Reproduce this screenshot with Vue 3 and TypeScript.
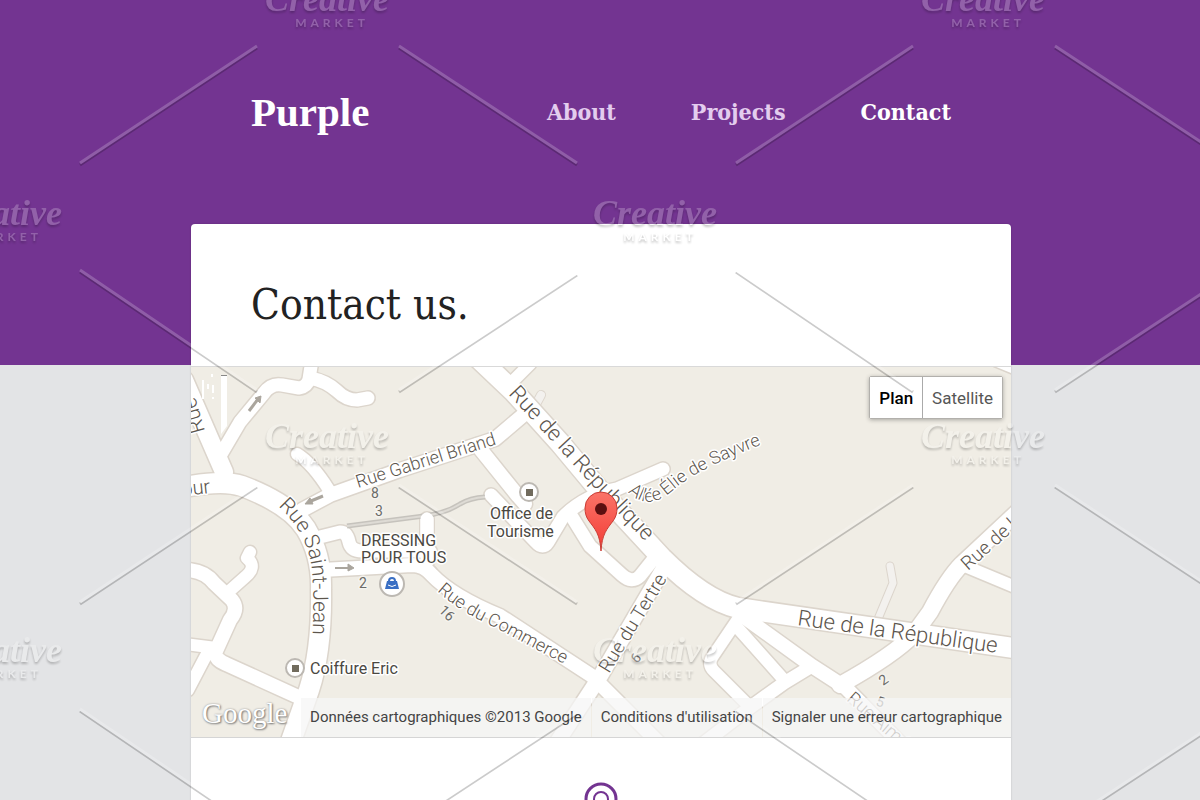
<script setup lang="ts">
interface Road {
  d: string
  w: number
}

interface StreetLabel {
  id: string
  d: string
  text: string
  size: number
}

interface Tile {
  x: number
  y: number
}

const navLinks = [
  { label: 'About', active: false },
  { label: 'Projects', active: false },
  { label: 'Contact', active: true },
]

const roads: Road[] = [
  { d: 'M184 380L224 472', w: 18 },
  { d: 'M220 456L240 422L264 393Q271 383 282 385L299 388Q307 387 309 379L312 360', w: 13 },
  { d: 'M310 378Q326 381 337 391Q346 400 357 400L368 398', w: 13 },
  { d: 'M180 488Q222 479 242 486Q290 504 306 529Q322 556 321 590Q322 650 309 690L290 744', w: 20 },
  { d: 'M297 454Q312 463 329 490', w: 12 },
  { d: 'M302 510L330 495L400 470L495 439L528 411', w: 14 },
  { d: 'M474 354L514 392L560 443L600 491L662 558Q704 600 738 608L1020 649', w: 20 },
  { d: 'M512 382L530 364', w: 12 },
  { d: 'M477 445L518 496L525 504', w: 14 },
  { d: 'M491 495L536 542Q543 550 548 542L563 517Q585 495 617 489L663 469', w: 13 },
  { d: 'M572 517L590 546L622 575Q632 584 640 576L656 556', w: 13 },
  { d: 'M666 564L601 675L556 744', w: 15 },
  { d: 'M322 570L412 565Q424 565 432 575Q452 596 500 616L592 676L662 746', w: 14 },
  { d: 'M320 537L340 532Q347 532 349 542Q351 551 362 551L430 551', w: 13 },
  { d: 'M427 519L427 562', w: 13 },
  { d: 'M250 552L247 558Q258 567 244 578L226 594', w: 12 },
  { d: 'M185 570Q204 570 214 583L232 600Q239 609 230 620L215 653Q216 660 226 664L305 700', w: 14 },
  { d: 'M185 644L216 648', w: 12 },
  { d: 'M210 648L188 690', w: 12 },
  { d: 'M1022 508L962 564Q948 578 930 612L914 634Q894 655 840 685', w: 16 },
  { d: 'M960 564L1020 589', w: 12 },
  { d: 'M740 616L713 656Q707 664 714 671L750 707', w: 12 },
  { d: 'M736 626L784 680', w: 12 },
  { d: 'M740 614L812 666L846 688L905 748', w: 14 },
  { d: 'M700 746L752 706L784 683L812 666', w: 13 },
  { d: 'M996 362L1020 372', w: 9 },
]

const lanes: Road[] = [
  { d: 'M534 408L541 395', w: 8 },
  { d: 'M890 566L893 583L878 619', w: 7 },
]

const streets: StreetLabel[] = [
  { id: 'rep-west', d: 'M508 394L560 450L600 494L680 578', text: 'Rue de la République', size: 22 },
  { id: 'rep-east', d: 'M797 625L1040 659', text: 'Rue de la République', size: 22 },
  { id: 'briand', d: 'M358 488L510 440', text: 'Rue Gabriel Briand', size: 18 },
  { id: 'saint-jean', d: 'M278 506Q308 533 312 570Q315 600 311 670', text: 'Rue Saint-Jean', size: 21 },
  { id: 'commerce', d: 'M437 591Q460 612 494 627L585 675', text: 'Rue du Commerce', size: 18 },
  { id: 'tertre', d: 'M609 674L680 558', text: 'Rue du Tertre', size: 19 },
  { id: 'sayvre', d: 'M628 492Q648 512 672 491Q700 466 780 438', text: 'Allée Élie de Sayvre', size: 18 },
  { id: 'north', d: 'M205 431L188 372', text: 'Rue', size: 21 },
  { id: 'four', d: 'M182 496L240 490', text: 'our', size: 20 },
  { id: 'east', d: 'M968 571L1040 507', text: 'Rue de l', size: 19 },
  { id: 'aime', d: 'M846 700L915 760', text: 'Rue Aimé', size: 18 },
]

const houseNumbers = [
  { text: '8', x: 371, y: 498, r: 0 },
  { text: '3', x: 375, y: 516, r: 0 },
  { text: '2', x: 359, y: 588, r: 0 },
  { text: '16', x: 438, y: 611, r: 45 },
  { text: '6', x: 637, y: 664, r: -50 },
  { text: '2', x: 883, y: 686, r: -35 },
  { text: '5', x: 875, y: 705, r: 20 },
]

const marks: Tile[] = [
  { x: 327, y: 0 },
  { x: 983, y: 0 },
  { x: 0, y: 214 },
  { x: 655, y: 214 },
  { x: 327, y: 437 },
  { x: 983, y: 437 },
  { x: 0, y: 651 },
  { x: 655, y: 651 },
]

const strokes: string[] = [0, 439].flatMap((y) =>
  [0, 656].map(
    (x) =>
      `M${80 + x} ${163 + y}l177-117M${399 + x} ${46 + y}l178 117` +
      `M${80 + x} ${270 + y}l177 120M${577 + x} ${273 + y}l-178 117`,
  ),
)
</script>

<template>
  <div class="page">
    <header class="header">
      <a class="logo" href="#">Purple</a>
      <nav class="nav">
        <a v-for="n in navLinks" :key="n.label" href="#" :class="{ active: n.active }">{{ n.label }}</a>
      </nav>
    </header>

    <main class="card">
      <h1>Contact us.</h1>

      <section class="map">
        <svg class="tiles" viewBox="191 367 820 370" preserveAspectRatio="xMidYMid slice">
          <g class="casing light">
            <path v-for="l in lanes" :key="l.d" :d="l.d" :stroke-width="l.w + 2" />
          </g>
          <g class="lane">
            <path v-for="l in lanes" :key="l.d" :d="l.d" :stroke-width="l.w" />
          </g>
          <g class="casing">
            <path v-for="r in roads" :key="r.d" :d="r.d" :stroke-width="r.w + 3" />
          </g>
          <g class="fill">
            <path v-for="r in roads" :key="r.d" :d="r.d" :stroke-width="r.w" />
          </g>
          <path class="rail" d="M347 526L424 516Q446 513 460 504Q470 498 485 497" />
          <path class="rail-core" d="M347 526L424 516Q446 513 460 504Q470 498 485 497" />
          <path d="M427 519v14" stroke="#fff" stroke-width="13" stroke-linecap="round" />

          <path d="M221 376h6v50l-6 8z" fill="#fff" />
          <path d="M221 375h6v1h-6z" fill="#888" />
          <path d="M203 380v19M208 384v5M212 374v3M213 385v8M213 397v2" stroke="#fff" stroke-width="2" />

          <g fill="#aaa59d" stroke="#aaa59d" stroke-width="3">
            <path d="M249 411l9-12" /><path d="M255 398l6-2-1 7z" stroke-width="1" />
            <path d="M323 496l-12 5" /><path d="M305 504l5-6 3 6z" stroke-width="1" />
            <path d="M335 568h14" stroke-width="2" /><path d="M348 564l6 4-6 3z" stroke-width="1" />
          </g>

          <defs>
            <path v-for="s in streets" :id="s.id" :key="s.id" :d="s.d" />
            <linearGradient id="pin-red" x1="0" y1="0" x2="0" y2="1">
              <stop offset="0" stop-color="#fb7468" />
              <stop offset="1" stop-color="#f23b35" />
            </linearGradient>
          </defs>
          <text v-for="s in streets" :key="s.id" class="street" :font-size="s.size">
            <textPath :href="'#' + s.id">{{ s.text }}</textPath>
          </text>
          <text
            v-for="(n, i) in houseNumbers"
            :key="i"
            class="number"
            :x="n.x"
            :y="n.y"
            :transform="`rotate(${n.r} ${n.x} ${n.y})`"
          >{{ n.text }}</text>

          <g class="poi">
            <circle cx="529" cy="492" r="9" />
            <path d="M526 489h7v7h-7z" />
            <circle cx="295" cy="668" r="9" />
            <path d="M292 665h7v7h-7z" />
            <circle cx="392" cy="584" r="12" />
          </g>
          <path d="M387 581h10l2 8h-14z" fill="#3a6fc4" />
          <path d="M389 583v-2a3 3 0 0 1 6 0v2" fill="none" stroke="#3a6fc4" stroke-width="2" />
          <path d="M388 585q4 3 8 0" fill="none" stroke="#fff" />
          <g class="place">
            <text x="490" y="519">Office de</text>
            <text x="487" y="537">Tourisme</text>
            <text x="361" y="546">DRESSING</text>
            <text x="361" y="563">POUR TOUS</text>
            <text x="310" y="674">Coiffure Eric</text>
          </g>

          <path
            d="M601 551C600 534 595 529 589 521C586 517 585 513 585 508A16 16 0 0 1 617 508C617 513 616 517 613 521C607 529 602 534 601 551Z"
            fill="url(#pin-red)"
            stroke="#ca3b33"
          />
          <circle cx="601" cy="509" r="6" fill="#5c0f10" />
        </svg>

        <div class="switch">
          <button type="button" class="on">Plan</button>
          <button type="button">Satellite</button>
        </div>
        <span class="google">Google</span>
        <div class="credits">
          <span>Données cartographiques ©2013 Google</span>
          <a href="#">Conditions d'utilisation</a>
          <a href="#">Signaler une erreur cartographique</a>
        </div>
      </section>

      <div class="address">
        <svg width="34" height="44" viewBox="0 0 34 44" fill="none" stroke="#733491">
          <path d="M17 42C15 32 2 26 2 17A15 15 0 0 1 32 17C32 26 19 32 17 42Z" stroke-width="3" />
          <circle cx="17" cy="17" r="7" stroke-width="2" />
        </svg>
      </div>
    </main>

    <svg class="watermark" aria-hidden="true">
      <g class="lines">
        <path v-for="s in strokes" :key="s" :d="s" />
      </g>
      <g v-for="m in marks" :key="m.x + '-' + m.y" class="mark">
        <text class="script" :x="m.x" :y="m.y + 11">Creative</text>
        <text class="caps" :x="m.x + 5" :y="m.y + 27">MARKET</text>
      </g>
    </svg>
  </div>
</template>

<style>
html,
body {
  margin: 0;
  background: #e3e4e6;
}
</style>

<style scoped>
.page {
  position: relative;
  box-sizing: border-box;
  height: 100vh;
  min-height: 600px;
  padding-left: 2px;
  overflow: hidden;
  background: linear-gradient(#733491 0 365px, #e3e4e6 365px);
  font-family: Roboto, 'Liberation Sans', sans-serif;
}

.header {
  display: flex;
  align-items: center;
  justify-content: space-between;
  box-sizing: border-box;
  width: min(820px, 100%);
  height: 224px;
  margin: 0 auto;
  padding: 0 60px;
}

.logo {
  color: #fff;
  font: bold 41px/48px 'Liberation Serif', serif;
  text-decoration: none;
}

.nav {
  display: flex;
  gap: 75px;
}

.nav a {
  color: #e3cdee;
  font: bold 23px/32px 'DejaVu Serif Condensed', 'DejaVu Serif', serif;
  text-decoration: none;
}

.nav a.active {
  color: #fff;
}

.card {
  width: min(820px, 100%);
  margin: 0 auto;
  border-radius: 4px 4px 0 0;
  background: #fff;
  box-shadow: 0 0 2px rgba(0, 0, 0, 0.2);
}

h1 {
  margin: 0;
  padding: 56px 60px 36px;
  color: #222;
  font: 400 42px/50px 'DejaVu Serif Condensed', 'DejaVu Serif', serif;
}

.map {
  position: relative;
  height: 370px;
  overflow: hidden;
  border-top: 1px solid #d9d9d9;
  border-bottom: 1px solid #d5d5d5;
  background: #f0ede5;
}

.tiles {
  display: block;
  width: 100%;
  height: 100%;
}

.casing,
.fill,
.lane {
  fill: none;
  stroke-linecap: round;
  stroke-linejoin: round;
}

.casing {
  stroke: #dcd5cc;
}

.fill {
  stroke: #fff;
}

.lane {
  stroke: #f3f1ee;
}

.rail {
  fill: none;
  stroke: #c6c3bd;
  stroke-width: 5px;
}

.rail-core {
  fill: none;
  stroke: #dedbd5;
  stroke-width: 2px;
}

.street,
.number,
.place {
  paint-order: stroke;
  stroke: #fff;
  stroke-width: 3px;
  stroke-linejoin: round;
}

.street {
  fill: #5c554d;
  font-weight: 300;
}

.number {
  fill: #6b6b68;
  stroke: #f5f3ee;
  font-size: 14px;
}

.place {
  fill: #4b4842;
  font-size: 16px;
}

.poi circle {
  fill: #fff;
  stroke: #bcb8b2;
  stroke-width: 2px;
}

.poi path {
  fill: #716b5d;
}

.switch {
  position: absolute;
  top: 9px;
  right: 8px;
  display: flex;
  border: 1px solid #b2b0ac;
  border-radius: 2px;
  box-shadow: 0 1px 4px rgba(0, 0, 0, 0.3);
}

.switch button {
  height: 41px;
  padding: 0 9px;
  border: 0;
  background: #fff;
  color: #565656;
  font: 400 17px/40px Roboto, sans-serif;
}

.switch .on {
  border-right: 1px solid #aaa;
  color: #000;
  font-weight: 500;
}

.google {
  position: absolute;
  bottom: 7px;
  left: 11px;
  color: #fff;
  font: 29px/34px 'Liberation Serif', serif;
  text-shadow: 1px 1px 2px #777, 0 0 2px #999;
}

.credits {
  position: absolute;
  right: 0;
  bottom: 0;
  display: flex;
  gap: 1px;
}

.credits > * {
  padding: 0 9px;
  background: rgba(245, 245, 245, 0.75);
  color: #444;
  font: 400 15px/39px Roboto, sans-serif;
  text-decoration: none;
  white-space: nowrap;
}

.address {
  display: flex;
  justify-content: center;
  min-height: 120px;
  padding-top: 44px;
}

.watermark {
  position: absolute;
  inset: 0;
  width: 100%;
  height: 100%;
  pointer-events: none;
}

.lines {
  fill: none;
  stroke: #fff;
  stroke-width: 3px;
  filter: drop-shadow(0 2px 0 #000);
  opacity: 0.2;
}

.mark {
  fill: #fff;
  text-anchor: middle;
  filter: drop-shadow(0 2px 1px #000);
  opacity: 0.22;
}

.script {
  font: italic bold 36px 'Liberation Serif', serif;
}

.caps {
  font: bold 12px Lato, sans-serif;
  letter-spacing: 4px;
}
</style>
